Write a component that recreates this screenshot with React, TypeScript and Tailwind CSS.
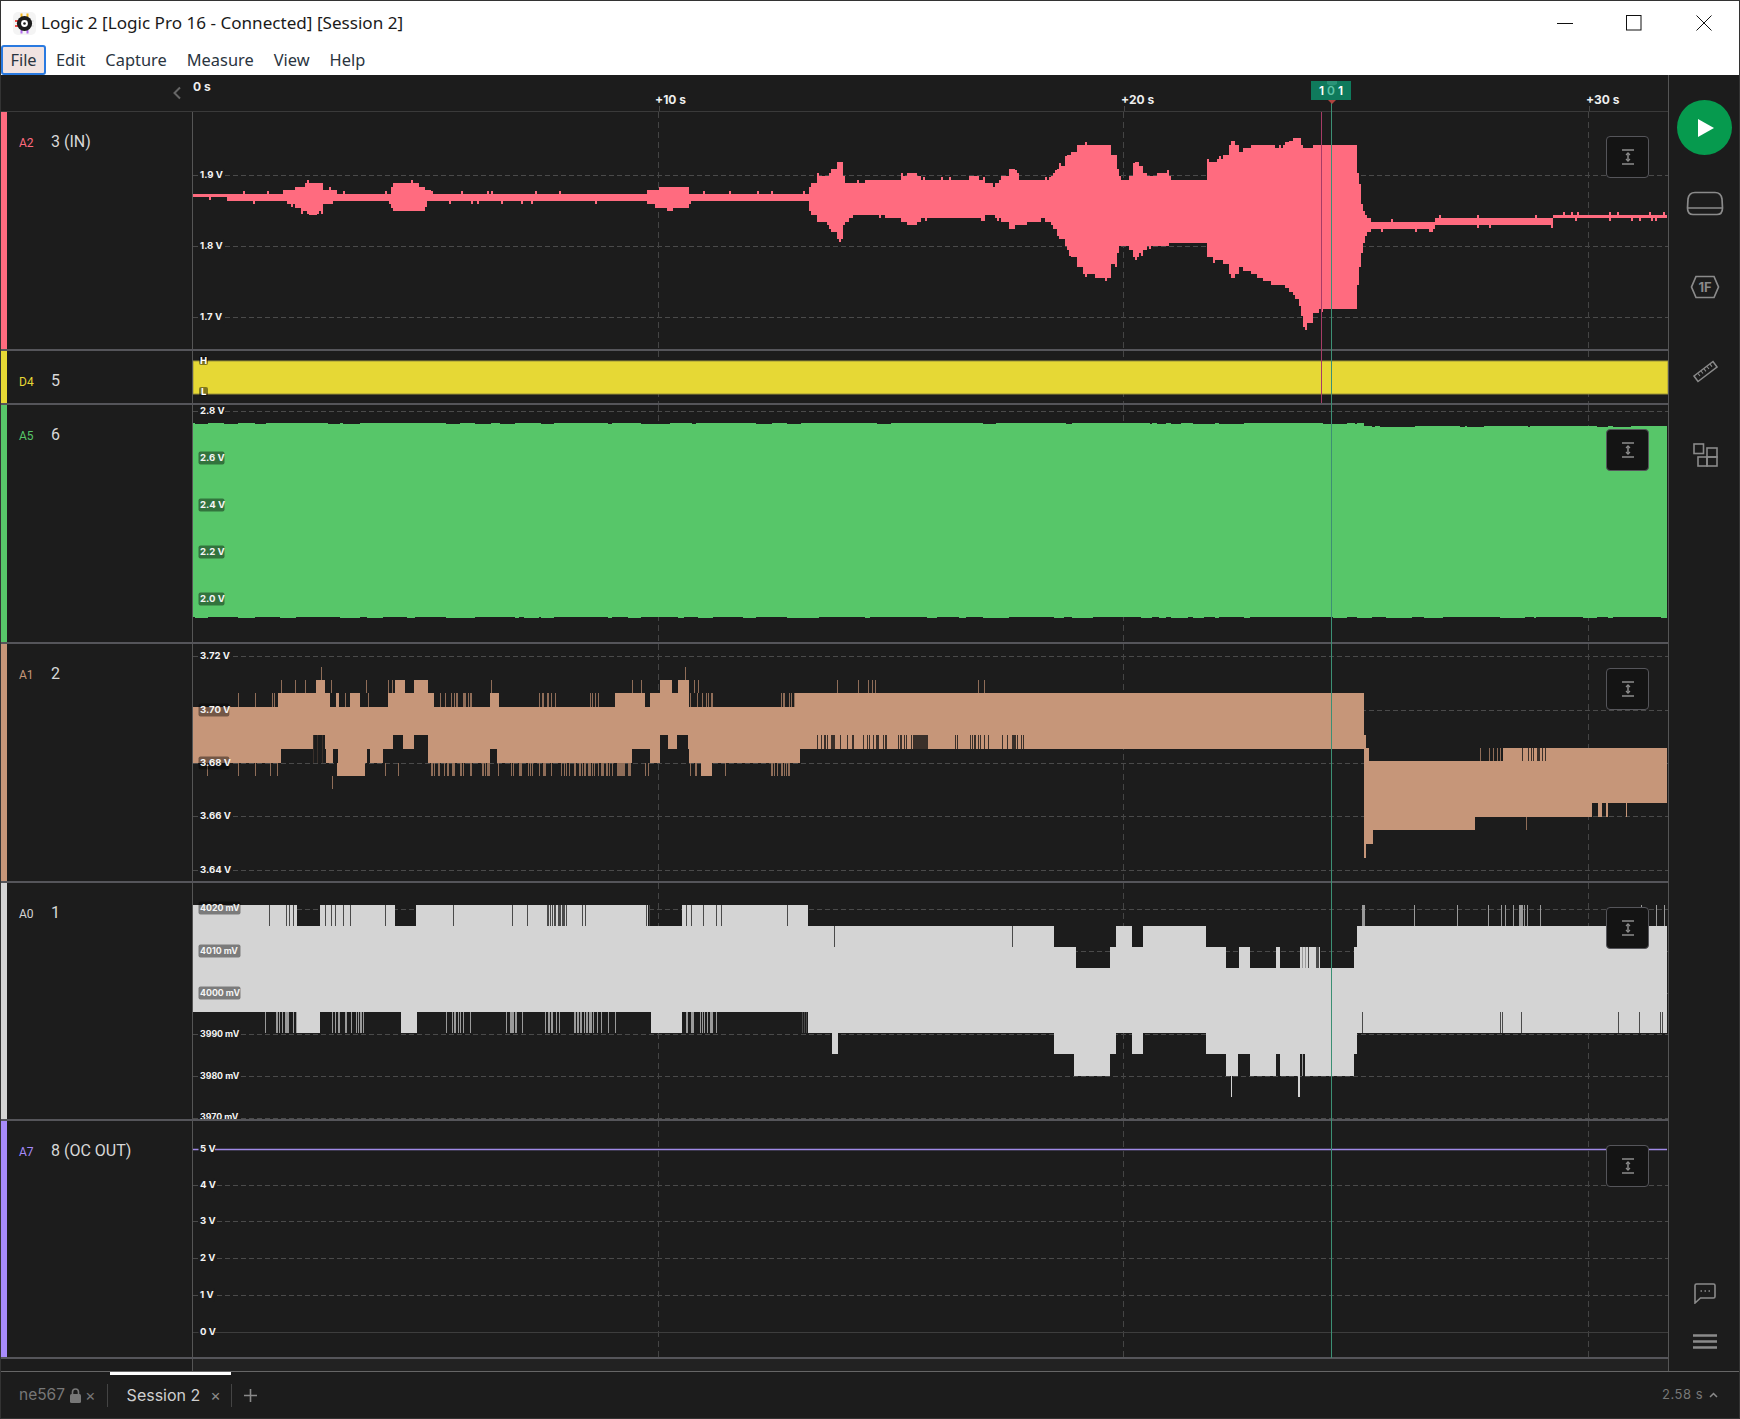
import type { ReactNode } from "react";

type Span = [number, number];

const BG = "#1c1c1c";
const GRID_X = [658, 1123, 1588];

// small seeded generator so the wave forms stay the same on every load
function makeRng(seed: number) {
  let s = seed;
  return () => {
    s = (s * 16807) % 2147483647;
    return s / 2147483647;
  };
}

const rects = (y0: number, y1: number, spans: Span[]) =>
  spans.map(([a, b]) => `M${a} ${y0}H${b}V${y1}H${a}Z`).join("");

const lines = (y0: number, y1: number, xs: number[], w = 1) =>
  rects(y0, y1, xs.map((x) => [x, x + w] as Span));

function scatter(seed: number, spans: Span[], perSpan = 0.28) {
  const rnd = makeRng(seed);
  const out: number[] = [];
  for (const [a, b] of spans) {
    for (let x = a; x < b; x++) {
      if (rnd() < perSpan) out.push(x);
    }
  }
  return out;
}

// [x, top, bottom] of the analog envelope on channel 3
const A2_ENV: [number, number, number][] = [
  [193, 192.5, 198], [235, 193, 199], [280, 193, 200], [285, 190, 203], [296, 187, 207], [300, 186, 210],
  [306, 184, 212], [313, 181.5, 215], [320, 184, 210], [324, 191, 203], [340, 192, 200], [385, 192, 200],
  [390, 186, 207], [395, 182, 212], [415, 182, 212], [422, 187, 208], [428, 192, 200], [640, 192.5, 200.5],
  [651, 190, 204], [664, 185, 210], [683, 185, 207], [688, 192, 202], [804, 193, 201], [812, 180, 217],
  [819, 175, 222], [827, 177, 226], [836, 161, 240], [845, 182, 222], [850, 185, 217], [863, 182, 213],
  [868, 178, 215], [880, 178, 216], [893, 181, 217], [909, 171, 226], [924, 181, 217], [967, 180, 217],
  [971, 175, 218], [993, 185, 215], [1011, 168, 229], [1018, 178, 224], [1041, 180, 219], [1049, 178, 222],
  [1062, 162, 242], [1080, 143, 272], [1090, 143, 275], [1105, 143, 278], [1113, 160, 260], [1120, 178, 245],
  [1128, 178, 247], [1135, 161, 258], [1148, 178, 245], [1161, 171, 247], [1174, 181, 242], [1201, 181, 242],
  [1207, 161, 257], [1220, 160, 260], [1232, 139, 279], [1240, 152, 267], [1250, 143, 273], [1268, 143, 283],
  [1276, 149, 283], [1286, 145, 287], [1298, 135, 300], [1303, 148, 327], [1314, 146, 312], [1319, 146, 309],
  [1355, 146, 308], [1357, 173, 283], [1362, 210, 245], [1365, 215, 235], [1370, 220, 228], [1375, 221, 229],
  [1434, 221, 229], [1435, 218, 226], [1474, 218, 226], [1475, 218, 223.5], [1552, 218, 223.5], [1553, 214.5, 218.7],
  [1667, 214.5, 218.7],
];

function envelope(points: [number, number, number][], seed: number) {
  const rnd = makeRng(seed);
  const quant = (v: number) => Math.round(197 + Math.round((v - 197) / 3.5) * 3.5);
  let d = "";
  let i = 0;
  let hold = 0;
  let top = 193;
  let bot = 198;
  for (let x = 193; x < 1667; x += 2) {
    while (i < points.length - 2 && points[i + 1][0] <= x) i++;
    const [x0, t0, b0] = points[i];
    const [x1, t1, b1] = points[i + 1];
    const k = (x - x0) / (x1 - x0);
    if (hold <= 0) {
      top = quant(t0 + (t1 - t0) * k);
      bot = quant(b0 + (b1 - b0) * k);
      // no stair steps on the steep fall at the end of the burst
      hold = x > 1340 ? 1 : 1 + Math.floor(rnd() * 3);
    }
    hold--;
    // the real trace has thin one-sample spikes on top of the envelope
    const up = rnd() < 0.07 ? 3 : 0;
    const down = rnd() < 0.07 ? 3 : 0;
    d += `M${x} ${top - up}H${x + 2}V${bot + down}H${x}Z`;
  }
  return d;
}

const A2_PATH = envelope(A2_ENV, 71);

function greenPath() {
  const rnd = makeRng(19);
  let d = "";
  let x = 193;
  while (x < 1667) {
    const run = 2 + Math.floor(rnd() * 16);
    const end = Math.min(x + run, x < 1364 ? 1364 : 1667);
    const after = x >= 1364;
    const top = (after ? 426 : 423) + (rnd() < 0.3 ? 1 : 0);
    const bot = 617 + (rnd() < 0.3 ? 1 : 0);
    d += `M${x} ${top}H${end}V${bot}H${x}Z`;
    x = end;
  }
  return d;
}
const A5_PATH = greenPath();

const A1_FILL =
  rects(680, 693, [[316, 325], [395, 405], [414, 428], [660, 672], [678, 689]]) +
  rects(693, 707, [[278, 330], [336, 339], [350, 360], [388, 434], [490, 499], [615, 645], [650, 689], [795, 1364]]) +
  rects(707, 735, [[193, 1364]]) +
  rects(735, 749, [[193, 313], [325, 393], [403, 414], [428, 660], [668, 677], [688, 1364]]) +
  rects(749, 763, [[193, 281], [326, 333], [338, 367], [370, 383], [428, 490], [497, 632], [650, 660], [689, 800]]) +
  rects(763, 776, [[337, 365], [701, 712]]) +
  rects(748, 844, [[1364, 1369]]) +
  rects(735, 858, [[1364, 1366]]) +
  rects(761, 803, [[1369, 1667]]) +
  rects(803, 830, [[1369, 1475]]) +
  rects(830, 844, [[1369, 1373]]) +
  rects(748, 761, [[1503, 1667]]) +
  rects(803, 817, [[1475, 1592], [1598, 1602], [1606, 1608], [1626, 1627]]);

const A1_TICKS =
  lines(693, 707, [238, 255, 272, 274, 345, 368, 393, 440, 445, 697, 702, 712, 784, 791, 799]) +
  lines(693, 707, scatter(5, [[451, 474], [538, 556], [587, 605], [690, 712], [780, 795]], 0.35)) +
  lines(680, 693, [281, 295, 305, 331, 366, 388, 392, 491, 632, 641, 694, 698, 837, 858, 868, 872, 875, 978, 984]) +
  lines(667, 680, [321, 685]) +
  lines(763, 776, [207, 238, 255, 270, 277, 385, 398]) +
  lines(763, 776, scatter(9, [[431, 490], [497, 556], [560, 632], [645, 650], [690, 700], [720, 730], [770, 790]], 0.38)) +
  lines(776, 789, [332]) +
  lines(748, 761, scatter(13, [[1480, 1503]], 0.45)) +
  lines(817, 830, [1526]);

const A1_DARK =
  lines(735, 749, scatter(21, [[817, 835], [840, 855], [860, 912], [955, 990], [1000, 1027]], 0.32)) +
  rects(735, 749, [[913, 928]]) +
  lines(748, 761, scatter(27, [[1522, 1546]], 0.32)) +
  lines(735, 763, [313, 317, 322]);

const A0_FILL =
  rects(905, 926, [[193, 297], [320, 395], [416, 648], [682, 808]]) +
  rects(926, 947, [[193, 1054], [1116, 1132], [1143, 1206], [1357, 1667]]) +
  rects(947, 968, [[193, 1076], [1110, 1226], [1239, 1250], [1276, 1280], [1300, 1320], [1354, 1667]]) +
  rects(968, 1012, [[193, 1667]]) +
  rects(1012, 1033, [[297, 320], [401, 417], [651, 682], [808, 1667]]) +
  rects(1033, 1054, [[832, 838], [1054, 1116], [1132, 1143], [1206, 1357]]) +
  rects(1054, 1076, [[1074, 1110], [1226, 1238], [1250, 1276], [1280, 1300], [1305, 1354]]) +
  rects(1076, 1097, [[1231, 1232], [1298, 1300]]);

const A0_DARK =
  lines(905, 926, [269, 286, 289, 293, 325, 331, 335, 343, 350, 385, 453, 512, 527, 582, 585, 646, 649, 686, 691, 703, 716, 721, 787]) +
  lines(905, 926, scatter(33, [[547, 568]], 0.5)) +
  lines(926, 947, [834, 1012]) +
  lines(947, 968, scatter(35, [[1305, 1320]], 0.35)) +
  lines(1012, 1033, [802, 804, 806, 1362, 1500, 1502, 1521, 1618, 1639, 1660, 1662]);

const A0_LIGHT =
  lines(1012, 1033, scatter(41, [[265, 297], [330, 365], [392, 394], [446, 471], [506, 525], [540, 560], [570, 617], [684, 722], [765, 766], [787, 788], [793, 794], [800, 801]], 0.32)) +
  lines(905, 926, [1362, 1363, 1364, 1414, 1457, 1488, 1501, 1505, 1540, 1641, 1656, 1664]) +
  lines(905, 926, scatter(43, [[1513, 1528]], 0.4)) +
  lines(947, 968, [1302, 1305]) +
  lines(1054, 1076, [1302]);

type AxisLabel = { text: string; y: number; chip?: boolean };

function Axis({ labels }: { labels: AxisLabel[] }) {
  return (
    <g>
      {labels.map((l) => {
        const isMv = l.text.endsWith("mV");
        const w = isMv ? 42 : l.text.length * 4.8 + 2;
        return (
          <g key={l.text}>
            <rect
              x={198.5}
              y={l.y - 6.5}
              width={w}
              height={13}
              rx={2}
              fill={l.chip ? "#000000" : BG}
              fillOpacity={l.chip ? 0.42 : 1}
            />
            <text x={200} y={l.y + 3} fontSize={isMv ? 8.8 : 9.6} fontWeight={700} fill="#f4f4f4" fontFamily="Inter, sans-serif">
              {l.text}
            </text>
          </g>
        );
      })}
    </g>
  );
}

function FitIcon() {
  return (
    <svg width="14" height="16" viewBox="0 0 14 16" fill="none" stroke="#8c8c8c" strokeWidth="1.5">
      <path d="M1 1H13M1 15H13M7 4V12" />
      <path d="M5 6L7 3.8L9 6M5 10L7 12.2L9 10" strokeWidth="1.2" />
    </svg>
  );
}

function Channel({
  id,
  name,
  color,
  top,
  h,
  grid = [],
  labels = [],
  fit = true,
  children,
}: {
  id: string;
  name: string;
  color: string;
  top: number;
  h: number;
  grid?: number[];
  labels?: AxisLabel[];
  fit?: boolean;
  children?: ReactNode;
}) {
  const inner = h - 2;
  const rowClass =
    h === 54 ? "flex h-[54px] border-b-2 border-[#55555a]" : h === 238 ? "flex h-[238px] border-b-2 border-[#55555a]" : "flex h-[239px] border-b-2 border-[#55555a]";
  return (
    <div className={rowClass}>
      <div className="flex w-[192px] shrink-0 border-r border-[#555]">
        <div className="w-[6px] shrink-0" style={{ backgroundColor: color }} />
        <div className="flex h-[60px] items-center pl-[12px] font-['Roboto',sans-serif]">
          <span className="w-[32px] pt-[2px] text-[12px]" style={{ color }}>
            {id}
          </span>
          <span className="text-[16px] text-[#d8d8d8]">{name}</span>
        </div>
      </div>
      <div className="relative w-[1475px] overflow-hidden">
        <svg className="block" width={1475} height={inner} viewBox={`193 ${top} 1475 ${inner}`}>
          {grid.map((y) => (
            <line key={y} x1={193} x2={1668} y1={y + 0.5} y2={y + 0.5} stroke="#4a4a4a" strokeDasharray="5 3" />
          ))}
          {GRID_X.map((x) => (
            <line key={x} x1={x + 0.5} x2={x + 0.5} y1={top} y2={top + inner} stroke="#444" strokeDasharray="6 4" />
          ))}
          {children}
          <Axis labels={labels} />
        </svg>
        {fit && (
          <button className="absolute right-[19px] top-6 flex h-[42px] w-[43px] items-center justify-center rounded-[4px] border border-[#55555a] bg-[#141414]">
            <FitIcon />
          </button>
        )}
      </div>
    </div>
  );
}

function Logo() {
  return (
    <svg width="23" height="23" viewBox="0 0 23 23">
      <rect width="23" height="23" rx="5" fill="#f4f4f4" />
      <path d="M8.5 1.5V5M14.5 1.5V5" stroke="#f5b81f" strokeWidth="2" />
      <path d="M2 9H5M2 14H5" stroke="#f0504d" strokeWidth="2" />
      <path d="M8.5 18V21.5M14.5 18V21.5" stroke="#b56cf0" strokeWidth="2" />
      <path d="M18 9H21M18 14H21" stroke="#e8e8e8" strokeWidth="2" />
      <circle cx="11.5" cy="11.5" r="7.6" fill="#1b1b1b" />
      <circle cx="11.5" cy="11.5" r="3.4" fill="#fff" />
      <circle cx="11.5" cy="11.5" r="1.3" fill="#1b1b1b" />
    </svg>
  );
}

function TitleBar() {
  const menus = ["Edit", "Capture", "Measure", "View", "Help"];
  return (
    <div className="h-[74px] bg-white font-['Noto_Sans',sans-serif] text-[#1a1a1a]">
      <div className="flex h-[44px] items-center">
        <div className="ml-[12px] mr-[5px]">
          <Logo />
        </div>
        <span className="text-[17.1px]">Logic 2 [Logic Pro 16 - Connected] [Session 2]</span>
        <div className="ml-auto flex items-center">
          <svg width="16" height="16" viewBox="0 0 16 16" className="mr-[53px]" stroke="#111" fill="none">
            <path d="M0 8.5H16" />
          </svg>
          <svg width="16" height="16" viewBox="0 0 16 16" className="mr-[54px]" stroke="#111" fill="none">
            <rect x="0.5" y="0.5" width="14.5" height="14.5" />
          </svg>
          <svg width="16" height="16" viewBox="0 0 16 16" className="mr-[27px]" stroke="#111" fill="none">
            <path d="M0.5 0.5L15.5 15.5M15.5 0.5L0.5 15.5" />
          </svg>
        </div>
      </div>
      <div className="flex h-[30px] items-center text-[16.4px] text-[#2a3440]">
        <div className="flex h-[30px] w-[45px] items-center justify-center rounded-[3px] border-2 border-[#2a7ae0] bg-[#f1e3e1]">
          File
        </div>
        {menus.map((m) => (
          <span key={m} className="px-[10px]">
            {m}
          </span>
        ))}
      </div>
    </div>
  );
}

function TimeHeader() {
  return (
    <div className="flex h-[37px] border-b border-[#3a3a3a]">
      <div className="flex w-[192px] shrink-0 items-center justify-end pr-[11px]">
        <svg width="10" height="14" viewBox="0 0 10 14" fill="none" stroke="#666" strokeWidth="2">
          <path d="M8 1.5L2.5 7L8 12.5" />
        </svg>
      </div>
      <svg className="block" width={1475} height={36} viewBox="192 75 1475 36" fontFamily="Inter, sans-serif" fontWeight={700} fontSize={12} fill="#eeeeee">
        <text x={192} y={91}>0 s</text>
        <text x={654} y={104}>+10 s</text>
        <text x={1120} y={104}>+20 s</text>
        <text x={1585} y={104}>+30 s</text>
        {GRID_X.map((x) => (
          <line key={x} x1={x + 0.5} x2={x + 0.5} y1={106} y2={111} stroke="#444" />
        ))}
      </svg>
    </div>
  );
}

function Markers() {
  return (
    <>
      <div className="absolute left-[1320px] top-[37px] h-[291px] w-px bg-[#a63c66]" />
      <div className="absolute left-[1330px] top-[25px] h-[1258px] w-px bg-[#3c8f74]" />
      <div className="absolute left-[1310px] top-[6px] flex h-[19px] w-[40px] items-center justify-center gap-[3px] bg-[#0f7a5c] font-['Inter',sans-serif] text-[12px] font-semibold text-white">
        <span>1</span>
        <span className="text-[#5fc4a8]">0</span>
        <span>1</span>
      </div>
      <svg className="absolute left-[1325px] top-[6px]" width="12" height="24" viewBox="0 0 12 24">
        <path d="M1 0H11V3Q6 6 1 3Z" fill="#5fc4a8" fillOpacity="0.35" />
        <path d="M2 19H10L6 23Z" fill="#b0443f" />
      </svg>
    </>
  );
}

function SideIcon({ children }: { children: ReactNode }) {
  return <div className="flex h-[84px] items-center justify-center pl-[2px]">{children}</div>;
}

function SideBar() {
  return (
    <div className="flex w-[71px] shrink-0 flex-col border-l border-[#555]">
      <div className="mx-auto mt-[25px] mb-[6px] flex h-[55px] w-[55px] items-center justify-center rounded-full bg-[#069a4e]">
        <svg width="16" height="18" viewBox="0 0 16 18" className="ml-[3px]">
          <path d="M0 0L16 9L0 18Z" fill="#fff" />
        </svg>
      </div>
      <SideIcon>
        <svg width="38" height="25" viewBox="0 0 38 25" fill="none" stroke="#8a8a8a" strokeWidth="1.7">
          <path d="M9 1.5H29Q35 1.5 36 8L36.5 17Q36.5 23.5 31 23.5H7Q1.5 23.5 1.5 17L2 8Q3 1.5 9 1.5Z" />
          <path d="M1.5 17H36.5" />
        </svg>
      </SideIcon>
      <SideIcon>
        <svg width="30" height="24" viewBox="0 0 30 24" fill="none" stroke="#8a8a8a" strokeWidth="1.7">
          <path d="M6 1.5H24L28.5 12L24 22.5H6L1.5 12Z" />
          <text x="15" y="17" textAnchor="middle" fontSize="13" fontWeight="700" fill="#8a8a8a" stroke="none" fontFamily="Inter, sans-serif">
            1F
          </text>
        </svg>
      </SideIcon>
      <SideIcon>
        <svg width="25" height="23" viewBox="0 0 25 23" fill="none" stroke="#8a8a8a" strokeWidth="1.5">
          <path d="M1 16L20 1.5L24 7L5 21.5Z" />
          <path d="M5 13.5L7 16M8 11L10 13.5M11 8.8L13 11.3M14 6.5L16 9M17 4.2L19 6.7" strokeWidth="1.1" />
        </svg>
      </SideIcon>
      <SideIcon>
        <svg width="25" height="24" viewBox="0 0 25 24" fill="none" stroke="#8a8a8a" strokeWidth="1.6">
          <rect x="1" y="1" width="9.5" height="9.5" />
          <rect x="14" y="5" width="10" height="9" />
          <rect x="5" y="14" width="9" height="9" />
          <rect x="14" y="14" width="10" height="9" />
        </svg>
      </SideIcon>
      <div className="mt-auto flex h-[48px] items-center justify-center pl-[1px]">
        <svg width="22" height="21" viewBox="0 0 22 21" fill="none" stroke="#8a8a8a" strokeWidth="1.6">
          <path d="M2.5 1H19.5Q21 1 21 2.5V13.5Q21 15 19.5 15H6.5L1 20V2.5Q1 1 2.5 1Z" />
          <path d="M6.5 8H8M10.5 8H12M14.5 8H16" strokeWidth="1.4" />
        </svg>
      </div>
      <div className="mb-[6px] flex h-[48px] items-center justify-center pl-[2px]">
        <svg width="24" height="15" viewBox="0 0 24 15" fill="none" stroke="#8a8a8a" strokeWidth="2.4">
          <path d="M0 1.5H24M0 7.5H24M0 13.5H24" />
        </svg>
      </div>
    </div>
  );
}

function TabBar() {
  return (
    <div className="flex h-[47px] items-center border-t border-[#666] font-['Inter',sans-serif] text-[16px]">
      <span className="ml-[18px] text-[15.5px] text-[#777]">ne567</span>
      <svg width="11" height="15" viewBox="0 0 11 15" className="ml-[5px]" fill="#777">
        <rect x="0" y="6" width="11" height="9" rx="1.5" />
        <path d="M2.5 6.5V4a3 3 0 0 1 6 0v2.5" fill="none" stroke="#777" strokeWidth="1.6" />
      </svg>
      <span className="ml-[4px] text-[#777]">×</span>
      <div className="ml-[11px] h-[23px] w-px bg-[#444]" />
      <div className="ml-[2px] flex h-full w-[121px] items-center border-t-[3px] border-white pb-[3px] pl-[17px] text-[#cfcfcf]">
        Session 2
        <span className="ml-[10px] text-[#8a8a8a]">×</span>
      </div>
      <div className="h-[23px] w-px bg-[#444]" />
      <svg width="13" height="13" viewBox="0 0 13 13" className="ml-[12px]" stroke="#8a8a8a" strokeWidth="1.6">
        <path d="M6.5 0V13M0 6.5H13" />
      </svg>
      <div className="ml-auto mr-[21px] flex items-center gap-[6px] text-[13px] tracking-[0.5px] text-[#777]">
        2.58 s
        <svg width="9" height="6" viewBox="0 0 9 6" fill="none" stroke="#8a8a8a" strokeWidth="1.5">
          <path d="M1 5L4.5 1.5L8 5" />
        </svg>
      </div>
    </div>
  );
}

export default function App() {
  return (
    <div className="flex h-[1419px] w-[1740px] flex-col border border-[#333] bg-[#1c1c1c]">
      <TitleBar />
      <div className="relative flex h-[1296px]">
        <div className="w-[1667px] shrink-0">
          <TimeHeader />
          <Channel
            id="A2"
            name="3 (IN)"
            color="#ff6b7f"
            top={112}
            h={239}
            grid={[175, 246, 317]}
            labels={[
              { text: "1.9 V", y: 175 },
              { text: "1.8 V", y: 246 },
              { text: "1.7 V", y: 317 },
            ]}
          >
            <path d={A2_PATH} fill="#ff6b7f" />
          </Channel>
          <Channel id="D4" name="5" color="#e6d835" top={351} h={54} fit={false}>
            <rect x={193} y={361} width={1475} height={33} fill="#e6d835" stroke="#9c9338" />
            <rect x={199} y={356} width={9} height={9} rx={2} fill="#000" fillOpacity={0.45} />
            <rect x={199} y={387} width={9} height={9} rx={2} fill="#000" fillOpacity={0.45} />
            <text x={200} y={364} fontSize={9.5} fontWeight={700} fill="#fff" fontFamily="Inter, sans-serif">H</text>
            <text x={201} y={395} fontSize={9.5} fontWeight={700} fill="#fff" fontFamily="Inter, sans-serif">L</text>
          </Channel>
          <Channel
            id="A5"
            name="6"
            color="#57c669"
            top={405}
            h={239}
            grid={[411]}
            labels={[
              { text: "2.8 V", y: 411 },
              { text: "2.6 V", y: 458, chip: true },
              { text: "2.4 V", y: 505, chip: true },
              { text: "2.2 V", y: 552, chip: true },
              { text: "2.0 V", y: 599, chip: true },
            ]}
          >
            <path d={A5_PATH} fill="#57c669" />
          </Channel>
          <Channel
            id="A1"
            name="2"
            color="#c69679"
            top={644}
            h={239}
            grid={[656, 710, 763, 816, 870]}
            labels={[
              { text: "3.72 V", y: 656 },
              { text: "3.70 V", y: 710, chip: true },
              { text: "3.68 V", y: 763, chip: true },
              { text: "3.66 V", y: 816 },
              { text: "3.64 V", y: 870 },
            ]}
          >
            <path d={A1_TICKS} fill="#8f6d58" />
            <path d={A1_FILL} fill="#c69679" />
            <path d={A1_DARK} fill="#3a302a" />
          </Channel>
          <Channel
            id="A0"
            name="1"
            color="#d4d4d4"
            top={883}
            h={238}
            grid={[909, 951, 993, 1034, 1076, 1118]}
            labels={[
              { text: "4020 mV", y: 908, chip: true },
              { text: "4010 mV", y: 951, chip: true },
              { text: "4000 mV", y: 993, chip: true },
              { text: "3990 mV", y: 1034 },
              { text: "3980 mV", y: 1076 },
              { text: "3970 mV", y: 1117 },
            ]}
          >
            <path d={A0_FILL} fill="#d4d4d4" />
            <path d={A0_DARK} fill="#4a4a4a" />
            <path d={A0_LIGHT} fill="#9a9a9a" />
          </Channel>
          <Channel
            id="A7"
            name="8 (OC OUT)"
            color="#a78bfa"
            top={1121}
            h={238}
            grid={[1185, 1221, 1258, 1295]}
            labels={[
              { text: "5 V", y: 1149 },
              { text: "4 V", y: 1185 },
              { text: "3 V", y: 1221 },
              { text: "2 V", y: 1258 },
              { text: "1 V", y: 1295 },
              { text: "0 V", y: 1332 },
            ]}
          >
            <line x1={193} x2={1668} y1={1332.5} y2={1332.5} stroke="#3d3d3d" />
            <line x1={193} x2={1667} y1={1149.5} y2={1149.5} stroke="#a08ae6" strokeWidth={1.6} />
          </Channel>
          <div className="flex h-[12px]">
            <div className="w-[192px] shrink-0 border-r border-[#555]" />
            <div className="w-[1475px] bg-[#222]" />
          </div>
        </div>
        <SideBar />
        <Markers />
      </div>
      <TabBar />
    </div>
  );
}
